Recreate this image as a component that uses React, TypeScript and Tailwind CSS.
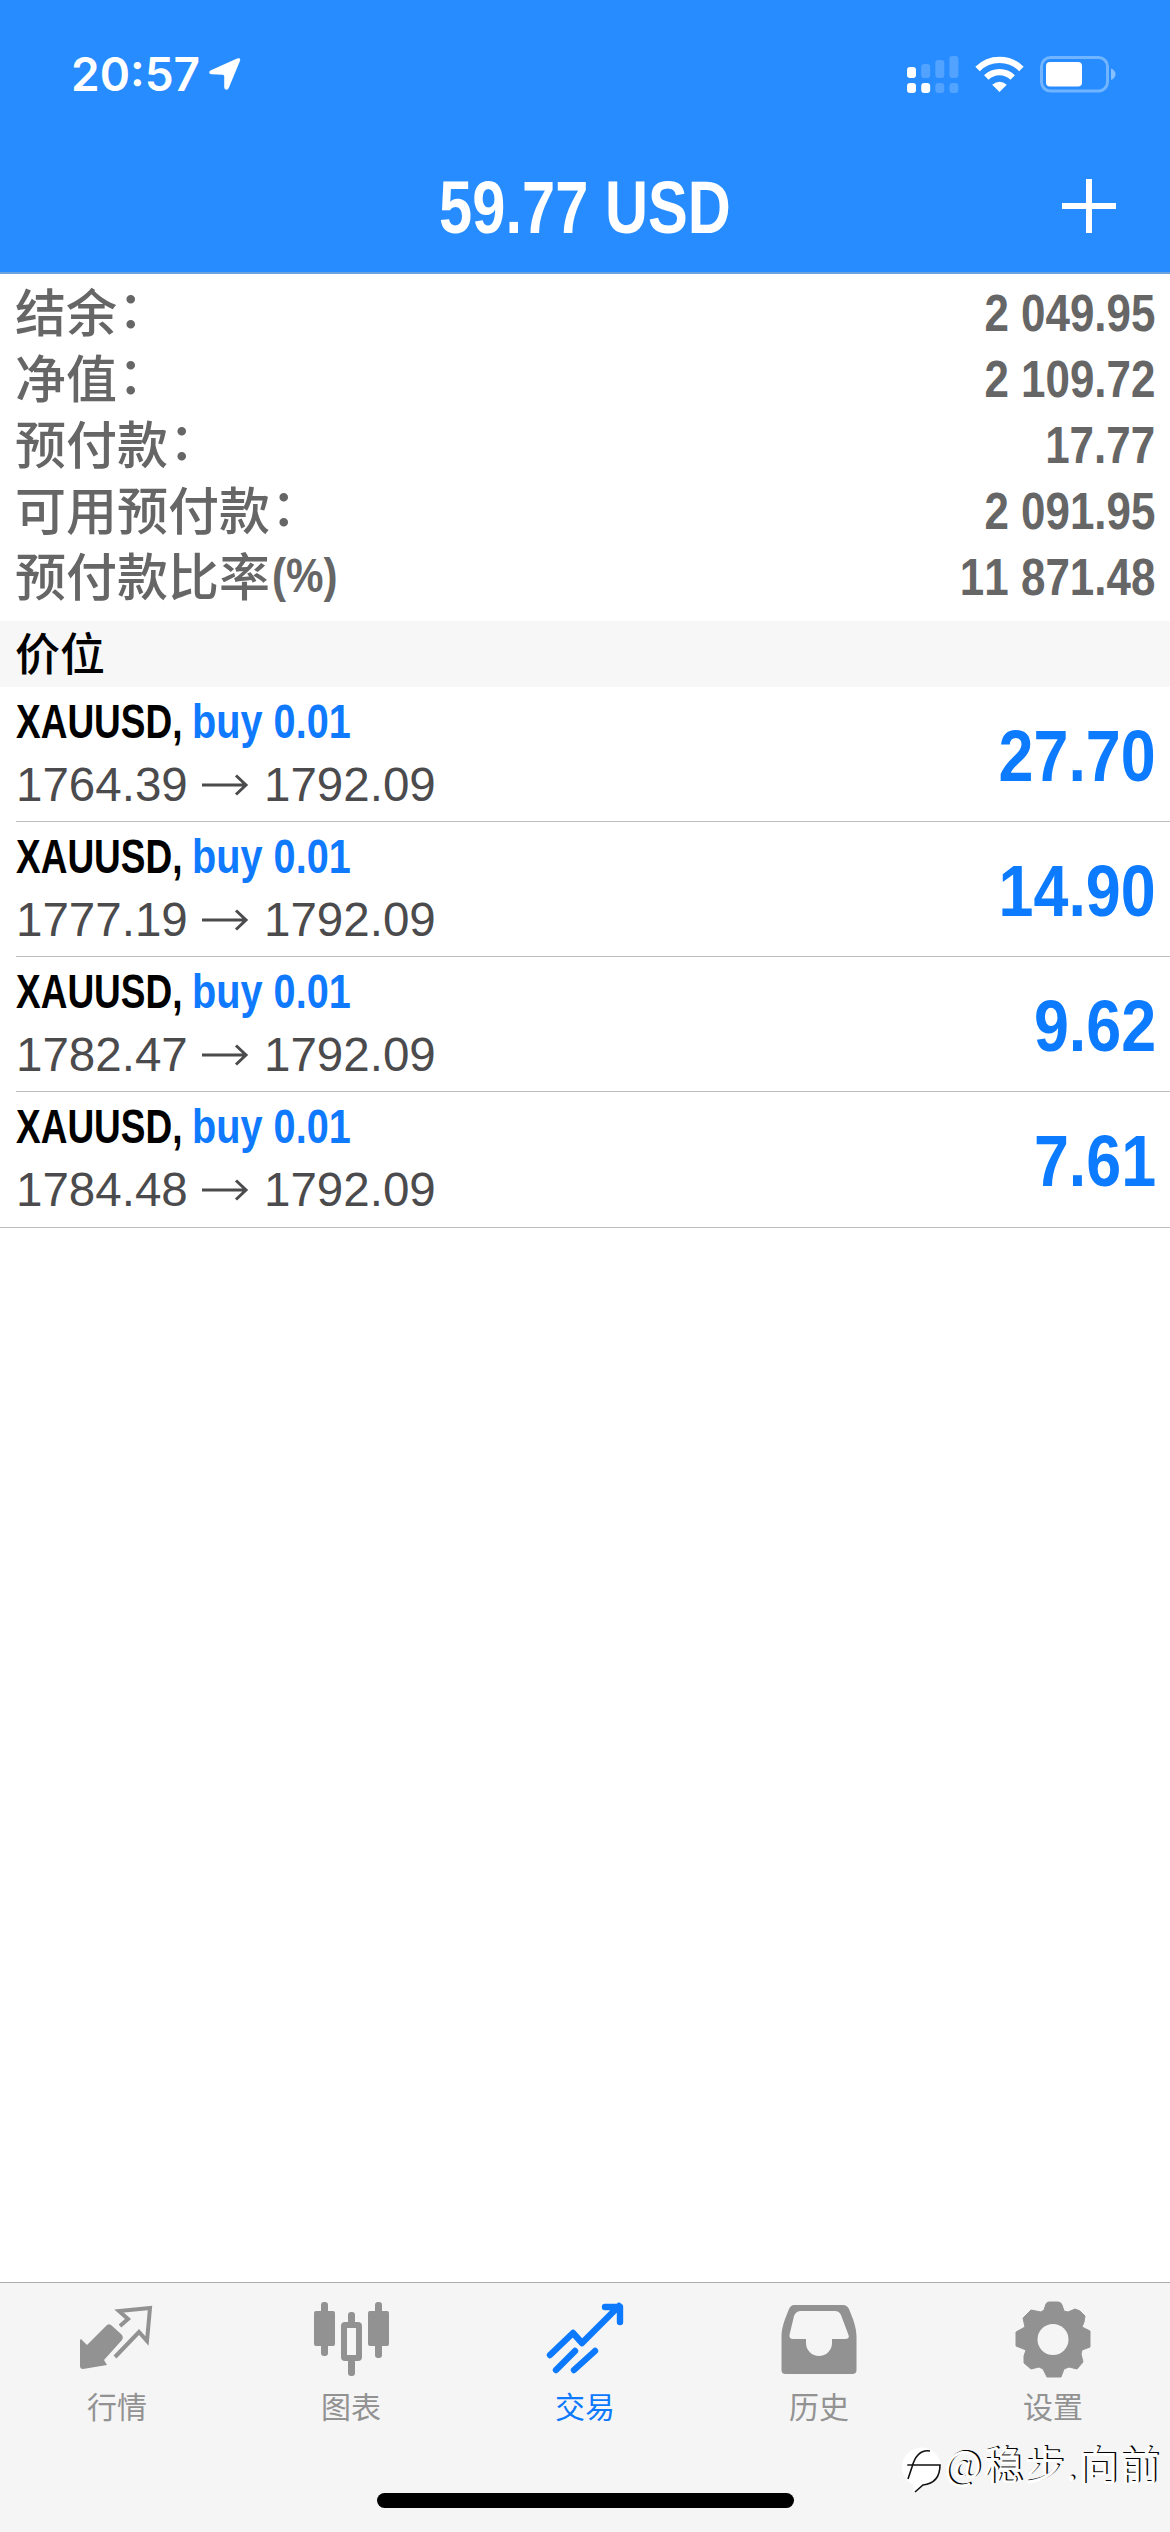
import React from "react";

const summary = [
  { label: "结余", suffix: "：", value: "2 049.95" },
  { label: "净值", suffix: "：", value: "2 109.72" },
  { label: "预付款", suffix: "：", value: "17.77" },
  { label: "可用预付款", suffix: "：", value: "2 091.95" },
  { label: "预付款比率", suffix: "(%)", value: "11 871.48" },
];

const positions = [
  { open: "1764.39", profit: "27.70" },
  { open: "1777.19", profit: "14.90" },
  { open: "1782.47", profit: "9.62" },
  { open: "1784.48", profit: "7.61" },
];

function StatusBar() {
  return (
    <div className="flex h-[150px] items-start justify-between pl-[71px] pr-[54px] pt-[44px]">
      <div className="flex items-start">
        <span className="block w-[127px] whitespace-nowrap font-['Inter'] text-[46px] font-semibold leading-[60px]">
          <span className="inline-block origin-left">20:57</span>
        </span>
        <svg className="ml-[11px] mt-[14px] h-[32px] w-[32px]" viewBox="0 0 33 36" preserveAspectRatio="none">
          <path d="M32 3.2 20.5 33.5Q19.5 36 17.5 35.600Q15.700 35.300 15.700 33V20.500Q15.700 19 14.200 18.900L2.500 18.300Q.2 18 .2 16.300Q.2 14.600 2.500 13.600L29 .6Q33-.8 32 3.200Z" fill="currentColor" />
        </svg>
      </div>
      <div className="flex items-start pt-[12px]">
        <svg className="h-[37px] w-[52px]" viewBox="0 0 52 37" fill="currentColor">
          <rect x="0" y="11" width="9" height="11" rx="3" />
          <rect x="0" y="27" width="9" height="10" rx="3" />
          <rect x="14.200" y="27" width="9" height="10" rx="3" />
          <g opacity=".2">
            <rect x="14.200" y="8" width="9" height="14" rx="3" />
            <rect x="28.300" y="4" width="9" height="18" rx="3" />
            <rect x="42.400" y="0" width="9" height="22" rx="3" />
            <rect x="28.300" y="27" width="9" height="10" rx="3" />
            <rect x="42.400" y="27" width="9" height="10" rx="3" />
          </g>
        </svg>
        <svg className="ml-4 h-[36px] w-[49px]" viewBox="0 0 49 36" fill="none" stroke="currentColor">
          <path d="M2.600 12.900A31 31 0 0 1 46.400 12.900" strokeWidth="6.400" />
          <path d="M11.300 21.600A18.700 18.700 0 0 1 37.700 21.600" strokeWidth="6.400" />
          <path d="M24.500 36 17.200 28.800Q24.500 22.500 31.800 28.800Z" fill="currentColor" stroke="none" />
        </svg>
        <svg className="ml-4 h-[37px] w-[76px]" viewBox="0 0 76 37">
          <rect x="1.500" y="1.500" width="66" height="33.500" rx="9" fill="none" stroke="white" strokeOpacity=".35" strokeWidth="3" />
          <rect x="6" y="6" width="36" height="24.500" rx="4" fill="white" />
          <path d="M71 12.500Q75.500 14.500 75.500 18.300T71 24Z" fill="white" opacity=".45" />
        </svg>
      </div>
    </div>
  );
}

function Header() {
  return (
    <header className="h-[274px] border-b-2 border-[#6aa3df] bg-[#268cff] text-white">
      <StatusBar />
      <div className="grid h-[122px] grid-cols-[150px_1fr_150px]">
        <span />
        <h1 className="mt-[13px] h-[90px] origin-center scale-x-[0.806] whitespace-nowrap text-center text-[74px] font-bold leading-[90px]">59.77 USD</h1>
        <svg className="ml-[42px] mt-[29px] h-[54px] w-[54px]" viewBox="0 0 54 54">
          <path d="M27 0V54M0 27H54" stroke="white" strokeWidth="6" />
        </svg>
      </div>
    </header>
  );
}

function Tab({ label, active = false, children }: { label: string; active?: boolean; children: React.ReactNode }) {
  return (
    <div className={active ? "flex flex-col items-center text-[#0c79fe]" : "flex flex-col items-center text-[#929292]"}>
      <svg className="mt-[11px] h-[84px] w-[84px]" viewBox="0 0 84 84" fill="none" stroke="currentColor">
        {children}
      </svg>
      <span className="mt-[7px] text-[30px] font-normal leading-[40px]">{label}</span>
    </div>
  );
}

export default function App() {
  return (
    <div className="flex h-[2532px] w-[1170px] flex-col overflow-hidden bg-white font-['Liberation_Sans','Noto_Sans_CJK_SC',sans-serif]">
      <Header />
      <section className="flex h-[347px] flex-col pl-[15px] pr-[15px] pt-[6px] text-[#666]">
        {summary.map(({ label, suffix, value }) => (
          <div key={label} className="flex h-[66px] items-center justify-between whitespace-nowrap">
            <span className="-mt-[6px] flex h-[66px] font-['Noto_Sans_CJK_SC',sans-serif] text-[51px] font-medium leading-[66px]">
              <span>{label}</span>
              {suffix === "(%)" ? (
                <span className="ml-[2px] origin-left scale-x-[0.86] font-['Liberation_Sans'] text-[49px] font-bold leading-[68px]">{suffix}</span>
              ) : (
                <span className="ml-[1px] -mt-[4px]">{suffix}</span>
              )}
            </span>
            <span className="origin-right scale-x-[0.845] text-[52px] font-bold leading-[66px] [font-kerning:none]">{value}</span>
          </div>
        ))}
      </section>
      <div className="flex h-[66px] items-start bg-[#f7f7f7] pl-[15px]">
        <span className="-mt-[2px] font-['Noto_Sans_CJK_SC',sans-serif] text-[45px] font-medium leading-[66px] text-black">价位</span>
      </div>
      <main className="flex-1">
        {positions.map(({ open, profit }, i) => (
          <div key={open} className={i === positions.length - 1 ? "border-b border-[#bdbdbf] pl-4" : "pl-4"}>
            <div className={i === positions.length - 1 ? "flex h-[135px] justify-between pr-[14px]" : "flex h-[135px] justify-between border-b border-[#bdbdbf] pr-[14px]"}>
              <div className="flex flex-col whitespace-nowrap">
                <div className="mt-[6px] flex h-[56px] text-[49px] font-bold leading-[56px]">
                  <span className="w-[176px] origin-left scale-x-[0.755] text-black">XAUUSD,</span>
                  <span className="origin-left scale-x-[0.81] text-[#107aff]">buy 0.01</span>
                </div>
                <div className="mt-[8px] flex h-[56px] items-center text-[48px] leading-[56px] text-[#4b4b4d]">
                  <span className="w-[172px] origin-left scale-x-[0.99]">{open}</span>
                  <svg className="ml-[13px] mr-[15px] h-6 w-[48px]" viewBox="0 0 48 24" fill="none" stroke="currentColor" strokeWidth="3">
                    <path d="M1 12H45M35 2.500 45 12 35 21.500" />
                  </svg>
                  <span className="origin-left scale-x-[0.99]">1792.09</span>
                </div>
              </div>
              <span className="mt-[29px] h-[80px] origin-right scale-x-[0.86] text-[73px] font-bold leading-[80px] text-[#0c7bff] [font-kerning:none]">{profit}</span>
            </div>
          </div>
        ))}
      </main>
      <footer className="relative flex h-[250px] flex-col border-t border-[#acacac] bg-[#f5f5f5]">
        <nav className="grid h-[160px] grid-cols-5 font-['Noto_Sans_CJK_SC',sans-serif]">
          <Tab label="行情">
            <path d="M5 46V72Q5 75 8 75L32 71 29 66 47 46Q49 43 46 40L36 31Q33 29 31 32L12 51 6 45Z" fill="currentColor" stroke="none" />
            <path d="M45 32 53 25 44 17 75 14 72 47 64 38 40 63" strokeWidth="4" />
          </Tab>
          <Tab label="图表">
            <g fill="currentColor" stroke="none">
              <rect x="12" y="8" width="7" height="54" rx="3" />
              <rect x="5" y="17" width="21" height="35" rx="2" />
              <rect x="66" y="8" width="7" height="56" rx="3" />
              <rect x="59" y="17" width="21" height="35" rx="2" />
              <rect x="39" y="18" width="7" height="12" rx="3" />
              <rect x="39" y="65" width="7" height="17" rx="3" />
            </g>
            <rect x="35" y="31" width="15" height="33" rx="1" strokeWidth="6" />
          </Tab>
          <Tab label="交易" active>
            <path d="M7 61 30 39 39 49 76 12M62 13H77V28" strokeWidth="6.400" strokeLinecap="round" strokeLinejoin="round" />
            <path d="M13 76 32 57M31 76 52 57" strokeWidth="6.400" strokeLinecap="round" />
          </Tab>
          <Tab label="历史">
            <path fillRule="evenodd" d="M17 11H66Q70 11 72 15C76 25 79.500 33 79.500 43V76Q79.500 80 75.500 80H8.500Q4.500 80 4.500 76V43C4.500 33 8 25 12 15Q14 11 17 11ZM24 17Q19 17 17 22L12.500 41Q12 45 16 45H29V49A13 13 0 0 0 55 49V45H68Q73 45 71.500 41L64 21Q62 17 58 17Z" fill="currentColor" stroke="none" />
          </Tab>
          <Tab label="设置">
            <path d="M38 8H47Q50 8 51 11L53 17 57 18 64 15 69 17 74 22 73 28 71 33 79 37V53L71 56 70 60 72 68 66 75 58 73 53 75 50 83H36L32 75 28 73 20 75 13 69 13 62 15 56 5 52V38L14 33 12 24 20 16 30 18 33 16 35 10Q36 8 38 8Z" fill="currentColor" stroke="currentColor" strokeWidth="1" strokeLinejoin="round" />
            <circle cx="42" cy="45.500" r="15.500" fill="#f5f5f5" stroke="none" />
          </Tab>
        </nav>
        <div className="mt-[50px] h-[15px] w-[417px] self-center rounded-full bg-black" />
        <div className="absolute right-[8px] top-[148px] flex items-center whitespace-nowrap text-white">
          <svg className="mt-[16px] h-[48px] w-[42px]" viewBox="0 0 42 48" fill="none">
            <circle cx="19.500" cy="20" r="19.500" fill="white" />
            <path d="M12 36 11 45 24 38Z" fill="white" />
            <path d="M6 32 10 20Q15 2 28 4M5.300 18H38Q38 36 21 38L13 45" stroke="#111" strokeWidth="1.600" />
          </svg>
          <span className="w-[218px] font-['Noto_Sans_CJK_SC',sans-serif] text-[40px] leading-[52px] tracking-[1.300px] [text-shadow:1.5px_-1.5px_0_black]">@稳步.向前</span>
        </div>
      </footer>
    </div>
  );
}
